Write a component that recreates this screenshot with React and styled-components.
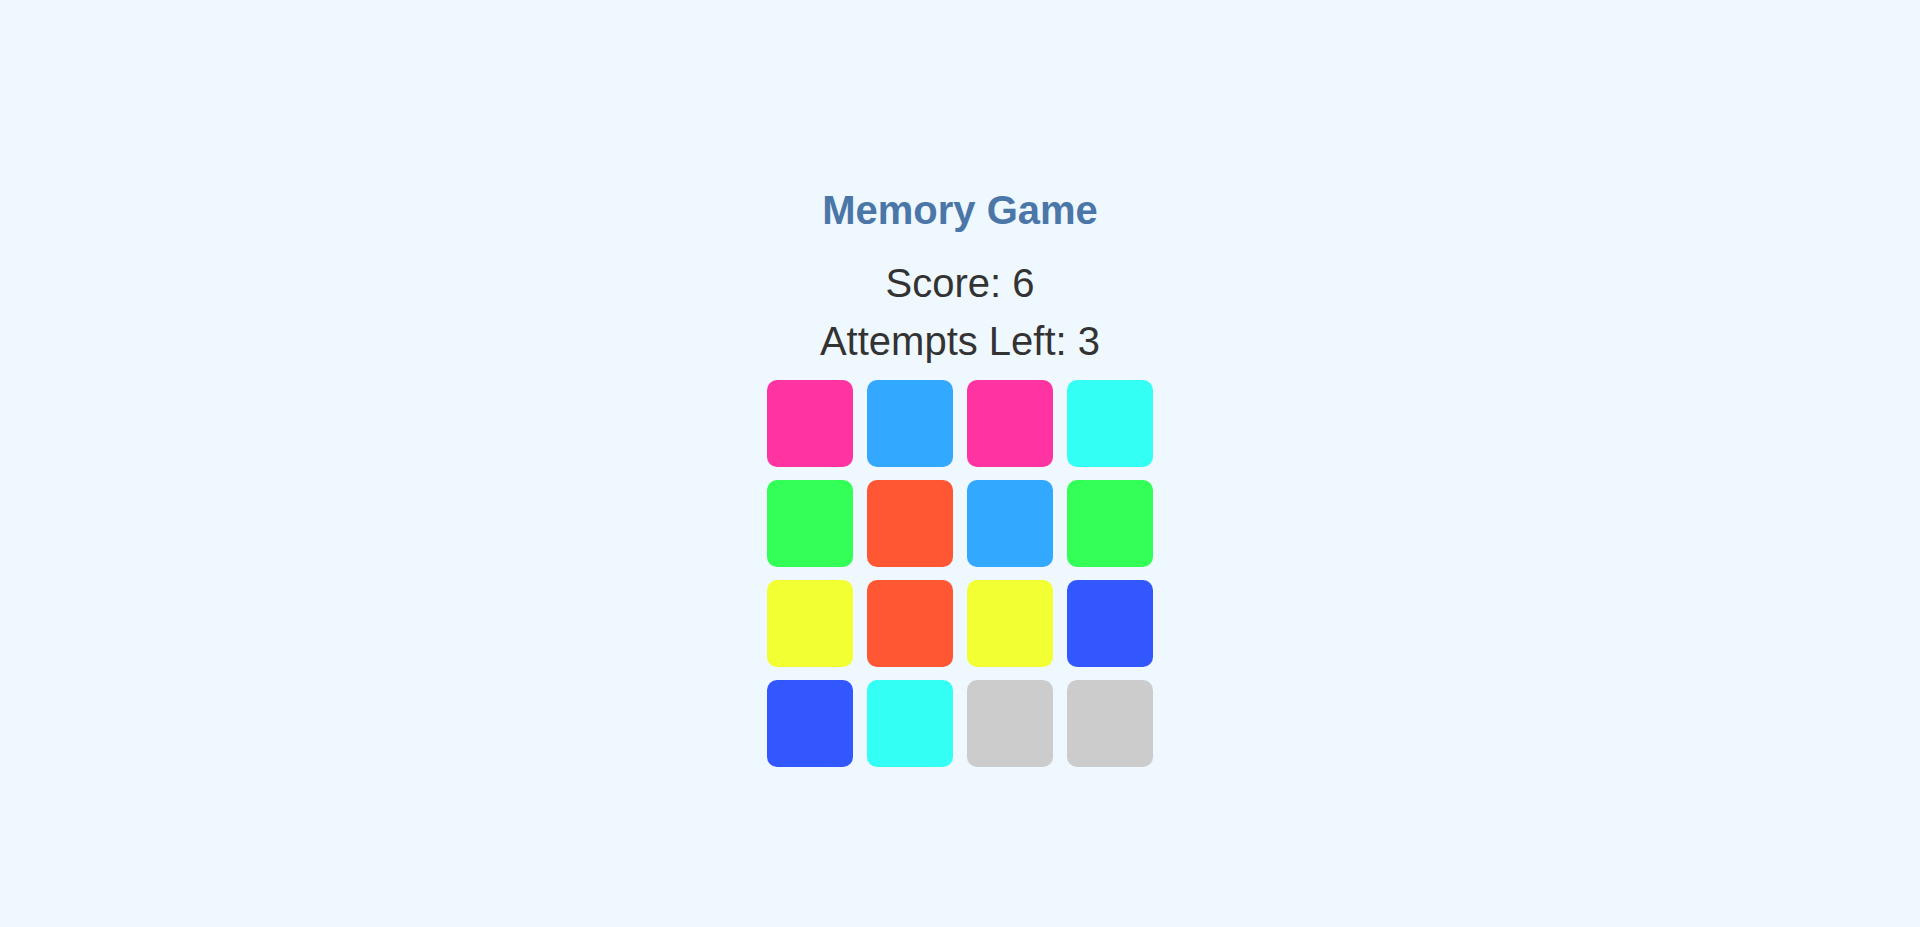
import React from "react";
import styled, { createGlobalStyle } from "styled-components";

const GlobalStyle = createGlobalStyle`
    html, body {
        margin: 0;
        padding: 0;
        background: #f0f8ff;
    }
    body {
        font-family: "Liberation Sans", Arial, sans-serif;
        color: #333333;
    }
`;

const Page = styled.div`
    min-height: 927px;
    display: flex;
    flex-direction: column;
    align-items: center;
    padding-top: 187px;
    box-sizing: border-box;
`;

const Title = styled.h1`
    margin: 0 0 27px;
    font-size: 40px;
    line-height: 46px;
    font-weight: 700;
    color: #4a76a8;
`;

const Stat = styled.p`
    margin: 0 0 ${({ $gap }) => $gap}px;
    font-size: 40px;
    line-height: 46px;
`;

const Board = styled.div`
    display: grid;
    grid-template-columns: repeat(4, 86.67px);
    grid-auto-rows: 86.67px;
    gap: 13.33px;
`;

const Tile = styled.div`
    border-radius: 10px;
    background: ${({ $color }) => $color};
    cursor: pointer;
`;

const tiles = [
    "#FF33A1", "#33A8FF", "#FF33A1", "#33FFF5",
    "#33FF57", "#FF5733", "#33A8FF", "#33FF57",
    "#F1FF33", "#FF5733", "#F1FF33", "#3357FF",
    "#3357FF", "#33FFF5", "#CCCCCC", "#CCCCCC",
];

const App = () => {
    return (
        <>
            <GlobalStyle />
            <Page>
                <Title>Memory Game</Title>
                <Stat $gap={12}>Score: 6</Stat>
                <Stat $gap={16}>Attempts Left: 3</Stat>
                <Board>
                    {tiles.map((color, i) => (
                        <Tile key={i} $color={color} />
                    ))}
                </Board>
            </Page>
        </>
    );
};

export default App;
